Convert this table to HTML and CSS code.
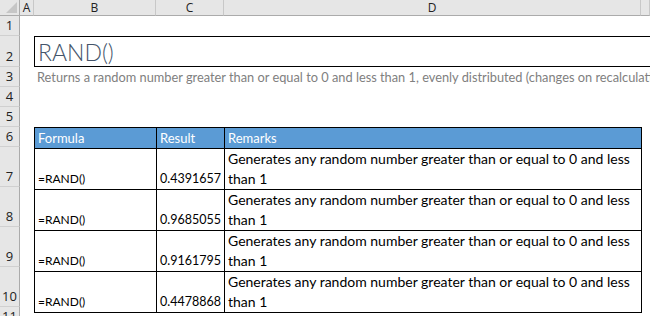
FILE: index.html
```html
<!DOCTYPE html>
<html lang="en">
  <head>
    <meta charset="UTF-8" />
    <meta name="viewport" content="width=device-width, initial-scale=1.0" />
    <title>RAND()</title>
    <link rel="stylesheet" href="styles.css">
  </head>
  <body>
    <div class="sheet">
      <div class="corner"></div>
      <div class="colhead">A</div>
      <div class="colhead">B</div>
      <div class="colhead">C</div>
      <div class="colhead">D</div>
      <div class="colhead"></div>

      <div class="rowhead r1">1</div>
      <div class="rowhead r2">2</div>
      <div class="rowhead r3">3</div>
      <div class="rowhead r4">4</div>
      <div class="rowhead r5">5</div>
      <div class="rowhead r6">6</div>
      <div class="rowhead r7">7</div>
      <div class="rowhead r8">8</div>
      <div class="rowhead r9">9</div>
      <div class="rowhead r10">10</div>
      <div class="rowhead r11">11</div>

      <div class="title">RAND()</div>
      <div class="desc">Returns a random number greater than or equal to 0 and less than 1, evenly distributed (changes on recalculation)</div>

      <table class="data">
        <tr class="head">
          <td class="f">Formula</td>
          <td class="v">Result</td>
          <td class="r">Remarks</td>
        </tr>
        <tr>
          <td class="f">=RAND()</td>
          <td class="v num">0.4391657</td>
          <td class="r">Generates any random number greater than or equal to 0 and less than 1</td>
        </tr>
        <tr>
          <td class="f">=RAND()</td>
          <td class="v num">0.9685055</td>
          <td class="r">Generates any random number greater than or equal to 0 and less than 1</td>
        </tr>
        <tr>
          <td class="f">=RAND()</td>
          <td class="v num">0.9161795</td>
          <td class="r">Generates any random number greater than or equal to 0 and less than 1</td>
        </tr>
        <tr>
          <td class="f">=RAND()</td>
          <td class="v num">0.4478868</td>
          <td class="r">Generates any random number greater than or equal to 0 and less than 1</td>
        </tr>
      </table>
    </div>
  </body>
</html>
```

FILE: styles.css
```css
* {
  margin: 0;
  padding: 0;
  box-sizing: border-box;
}
body {
  background: #fff;
  overflow: hidden;
  font-family: Lato, "Liberation Sans", sans-serif;
}
.sheet {
  display: grid;
  grid-template-columns: 20px 14px 122px 68px 417px 9px;
  grid-template-rows: 16px 20px 31px 20px 20px 20px 20px 40px 40px 40px 40px 20px;
  width: 650px;
  height: 316px;
  overflow: hidden;
}
.corner {
  position: relative;
  background: #e6e6e6;
  border-right: 1px solid #ababab;
  border-bottom: 1px solid #ababab;
}
.corner::after {
  content: "";
  position: absolute;
  right: 2px;
  bottom: 2px;
  border-left: 11px solid transparent;
  border-bottom: 11px solid #c6c6c6;
}
.colhead {
  background: #e6e6e6;
  border-right: 1px solid #c8c8c8;
  border-bottom: 1px solid #ababab;
  font: 12px "Open Sans", "Noto Sans", sans-serif;
  color: #222;
  text-align: center;
  line-height: 15px;
}
.rowhead {
  grid-column: 1;
  background: #e6e6e6;
  border-right: 1px solid #ababab;
  border-bottom: 1px solid #d0d0d0;
  font: 13px "Open Sans", "Noto Sans", sans-serif;
  color: #222;
  display: flex;
  align-items: flex-end;
  justify-content: center;
  padding-bottom: 1px;
}
.r1 { grid-row: 2; }
.r2 { grid-row: 3; }
.r3 { grid-row: 4; }
.r4 { grid-row: 5; }
.r5 { grid-row: 6; }
.r6 { grid-row: 7; }
.r7 { grid-row: 8; }
.r8 { grid-row: 9; }
.r9 { grid-row: 10; }
.r10 { grid-row: 11; }
.r11 { grid-row: 12; }

.title {
  grid-column: 3 / 8;
  grid-row: 3;
  border: 1px solid #000;
  border-right: none;
  font: 300 23px Lato, sans-serif;
  color: #44546a;
  padding-left: 3px;
  line-height: 30px;
  width: 640px;
}
.desc {
  grid-column: 3 / 7;
  grid-row: 4;
  font-size: 12.8px;
  color: #808080;
  white-space: nowrap;
  padding-left: 3px;
  line-height: 20px;
}

.data {
  grid-column: 3 / 6;
  grid-row: 7 / 12;
  border-collapse: collapse;
  table-layout: fixed;
  width: 607px;
  height: 180px;
  font-size: 14px;
  color: #000;
}
.data td {
  border: 1px solid #000;
  vertical-align: bottom;
  padding: 0 3px;
  line-height: 20px;
}
.data .f { width: 122px; font-size: 12px; }
.data .v { width: 68px; }
.data .num { text-align: right; font-size: 12.5px; }
.data .r { width: 417px; }
.data .head { height: 20px; }
.data .head td {
  background: #5b9bd5;
  color: #fff;
  font-size: 13px;
}
```
